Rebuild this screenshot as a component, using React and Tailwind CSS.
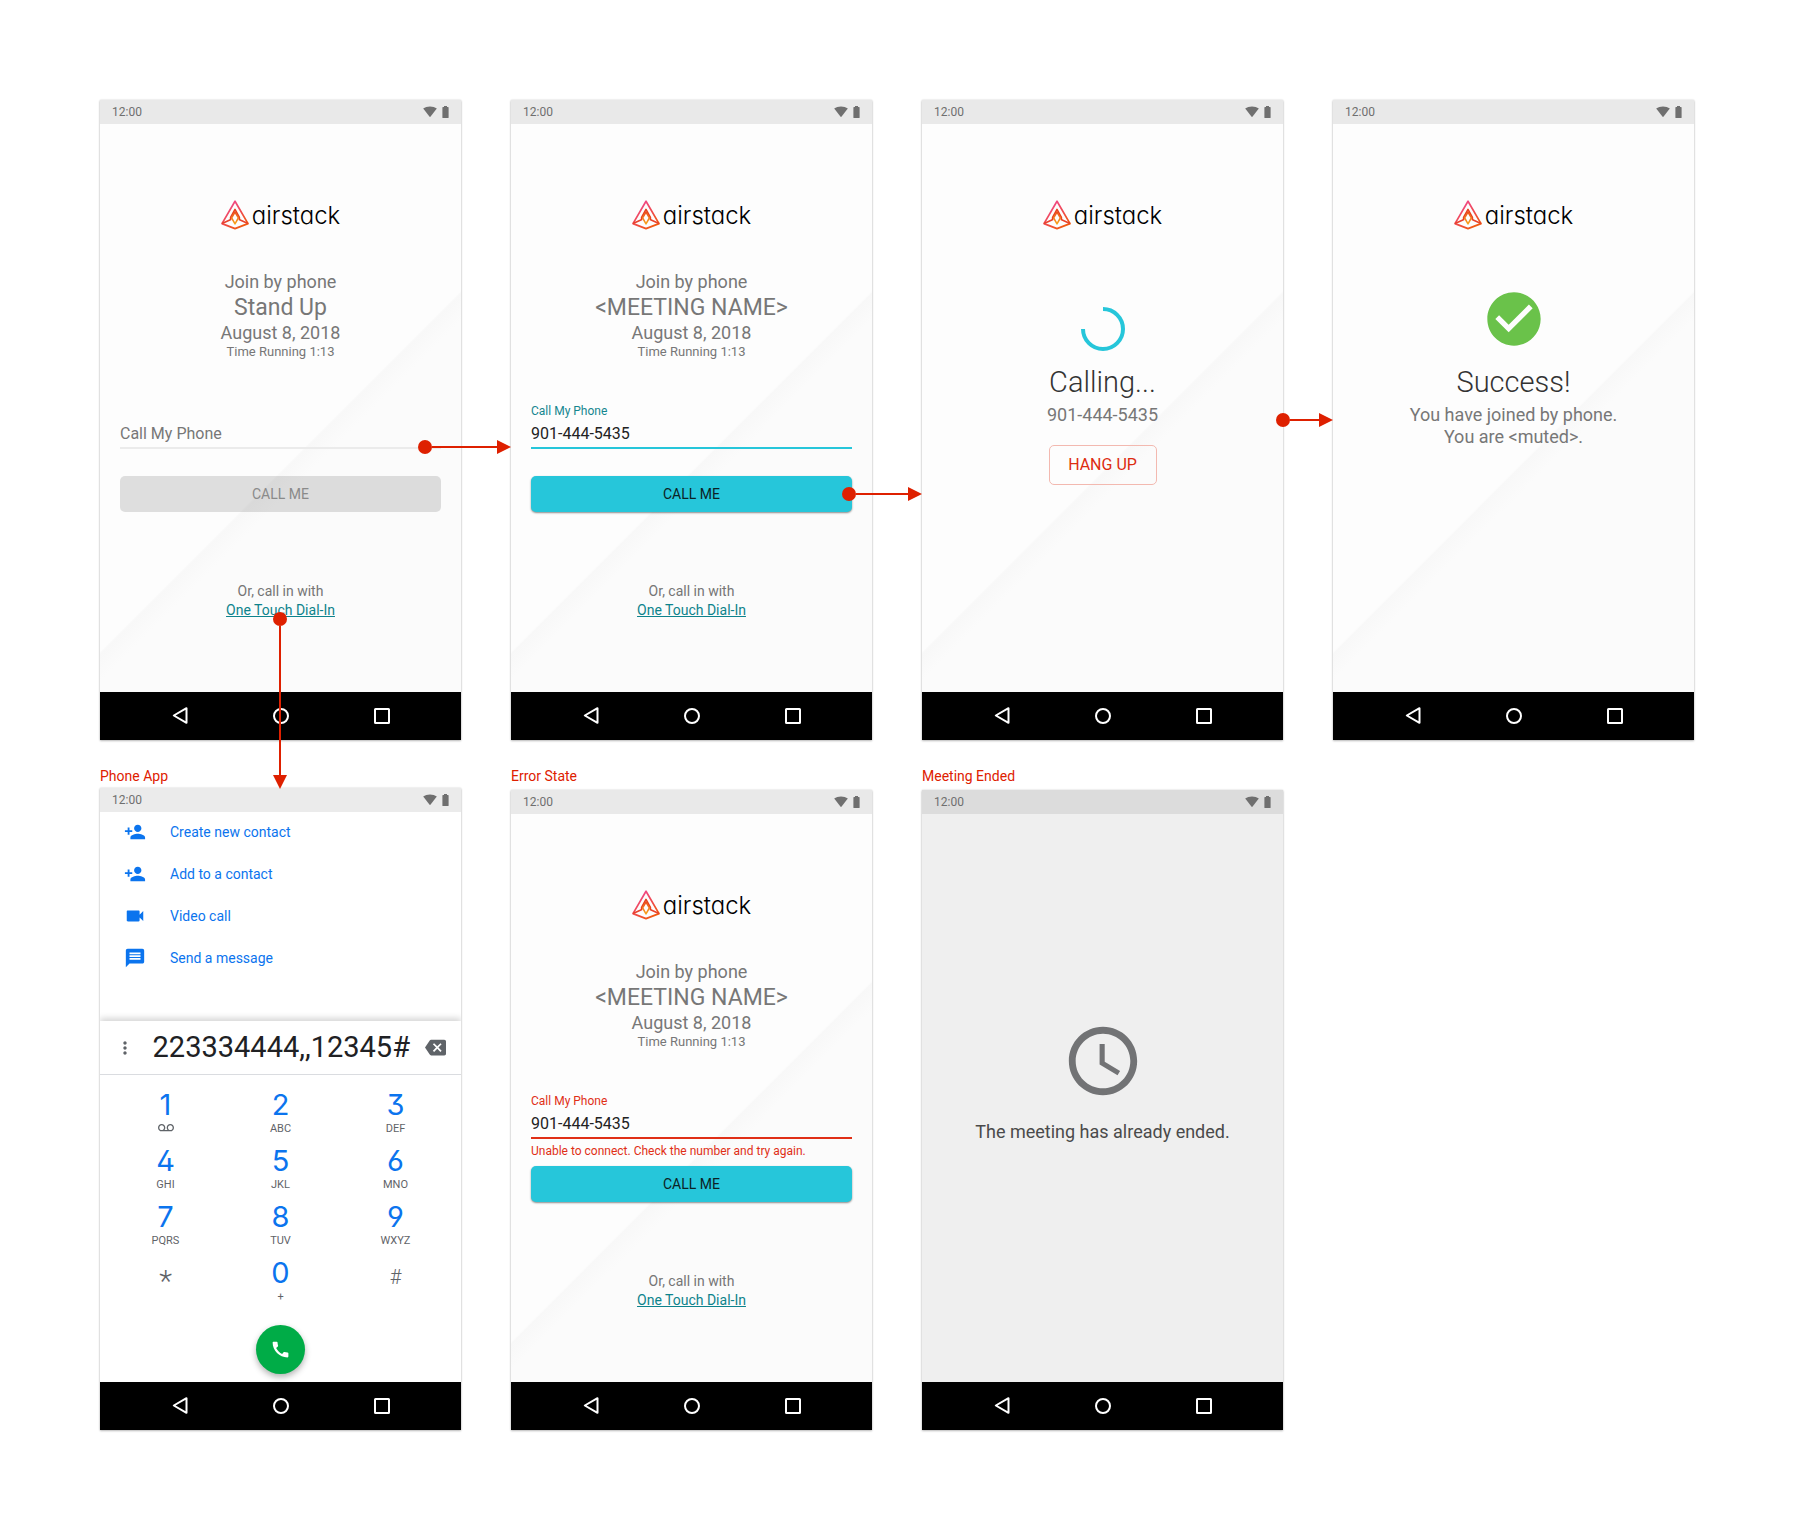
import React, { useId } from "react";
import {
  MdAccessTime,
  MdBackspace,
  MdCall,
  MdCheckCircle,
  MdMessage,
  MdMoreVert,
  MdPersonAdd,
  MdVideocam,
  MdVoicemail,
} from "react-icons/md";

function StatusBar({ className = "bg-[#e9e9e9]" }) {
  return (
    <div className={`flex h-6 items-center justify-between px-3 text-[#6f6f6f] ${className}`}>
      <span className="text-[12px]">12:00</span>
      <span className="flex items-center gap-[5px]">
        <svg width="14" height="12" viewBox="0 0 14 12" fill="currentColor" aria-hidden="true">
          <path d="M0.2 2.6C2 1.2 4.4 0.4 7 0.4s5 0.8 6.8 2.2L7.6 10.6a0.8 0.8 0 0 1-1.2 0z" />
        </svg>
        <svg width="7" height="12" viewBox="0 0 7 12" fill="currentColor" aria-hidden="true">
          <path d="M2 0h3v1h1q0.6 0 0.6 0.6v9.8q0 0.6-0.6 0.6H1q-0.6 0-0.6-0.6V1.6Q0.4 1 1 1h1z" />
        </svg>
      </span>
    </div>
  );
}

function NavBar() {
  const button = "flex size-6 items-center justify-center";
  return (
    <nav className="flex h-12 shrink-0 items-center justify-center gap-[77px] bg-black text-white">
      <button type="button" aria-label="Back" className={button}>
        <svg width="18" height="20" viewBox="0 0 18 20" fill="none" stroke="currentColor" strokeWidth="2" strokeLinejoin="round">
          <path d="M15.5 2.2v14.6L2.8 9.5z" />
        </svg>
      </button>
      <button type="button" aria-label="Home" className={button}>
        <svg width="18" height="18" viewBox="0 0 18 18" fill="none" stroke="currentColor" strokeWidth="2">
          <circle cx="9" cy="9" r="7" />
        </svg>
      </button>
      <button type="button" aria-label="Recent apps" className={button}>
        <svg width="18" height="18" viewBox="0 0 18 18" fill="none" stroke="currentColor" strokeWidth="2">
          <rect x="2" y="2" width="14" height="14" rx="0.5" />
        </svg>
      </button>
    </nav>
  );
}

const SHEEN =
  "bg-[linear-gradient(135deg,#fdfdfd_373px,#f8f8f8_375px,#fbfbfb_394px)]";

function Phone({ children, statusClass, bodyClass = SHEEN }) {
  return (
    <article className="flex min-h-[640px] flex-1 flex-col shadow-[0_0_2px_rgba(0,0,0,0.14),0_1px_2px_rgba(0,0,0,0.24)]">
      <StatusBar className={statusClass} />
      <div className={`flex flex-1 flex-col ${bodyClass}`}>{children}</div>
      <NavBar />
    </article>
  );
}

function Logo() {
  const id = useId();
  return (
    <div className="mt-[76px] flex h-[30px] items-center justify-center gap-[3px]">
      <svg width="28" height="30" viewBox="0 0 28 30" fill="none" strokeLinejoin="round" aria-hidden="true">
        <defs>
          <linearGradient id={`${id}a`} x1="6" y1="4" x2="22" y2="26" gradientUnits="userSpaceOnUse">
            <stop offset="0" stopColor="#f04a8c" />
            <stop offset="0.55" stopColor="#ef4a4a" />
            <stop offset="1" stopColor="#f05a10" />
          </linearGradient>
          <linearGradient id={`${id}b`} x1="14" y1="10" x2="14" y2="24" gradientUnits="userSpaceOnUse">
            <stop offset="0" stopColor="#e8401c" />
            <stop offset="1" stopColor="#f8a51b" />
          </linearGradient>
        </defs>
        <path d="M14 1.2 1 23.6 14 28.6 27 23.6z" stroke={`url(#${id}a)`} strokeWidth="1.7" />
        <path d="M1 23.6 9.4 19.8M27 23.6 18.6 19.8" stroke="#e8432c" strokeWidth="1.6" />
        <path d="M9.6 20.2V17.4L14 9.4 18.4 17.4v2.8" stroke="#e8401c" strokeWidth="1.6" />
        <path d="M14 12 10.6 17.8 14 23.8 17.4 17.8z" stroke={`url(#${id}b)`} strokeWidth="1.6" />
      </svg>
      <span className="font-['Inter',sans-serif] text-[24px] font-light leading-[31px] text-black [font-feature-settings:'cv11']">
        airstack
      </span>
    </div>
  );
}

function JoinScreen({ meeting, state }) {
  const id = useId();
  const idle = state === "idle";
  const error = state === "error";
  const line = idle ? "border-[#ebebeb]" : error ? "border-[#e02f16]" : "border-[#26c6da]";
  return (
    <Phone>
      <Logo />
      <header className="mt-10 text-center text-[#777]">
        <p className="text-[18px] leading-6">Join by phone</p>
        <h2 className="text-[23px] leading-7">{meeting}</h2>
        <p className="text-[18px] leading-[22px]">August 8, 2018</p>
        <p className="text-[13px] leading-4">Time Running 1:13</p>
      </header>
      <form className="mt-[43px] px-5" onSubmit={(e) => e.preventDefault()}>
        <label
          htmlFor={id}
          className={`block h-4 text-[12px] leading-4 ${error ? "text-[#e02f16]" : "text-[#15868f]"}`}
        >
          {!idle && "Call My Phone"}
        </label>
        <input
          id={id}
          type="tel"
          aria-label="Call My Phone"
          placeholder="Call My Phone"
          defaultValue={idle ? "" : "901-444-5435"}
          className={`block h-[30px] w-full border-b-2 bg-transparent p-0 text-[16px] text-[#222] outline-none placeholder:text-[#777] ${line}`}
        />
        <p className="h-[27px] text-[12px] leading-6 text-[#e02f16]">
          {error && "Unable to connect. Check the number and try again."}
        </p>
        <button
          type="submit"
          disabled={idle}
          className={`h-9 w-full rounded-[5px] text-[14px] ${
            idle
              ? "bg-black/12 text-[#8a8a8a]"
              : "bg-[#26c6da] text-[#0c2225] shadow-[0_1px_2px_rgba(0,0,0,0.45)]"
          }`}
        >
          CALL ME
        </button>
      </form>
      <p className="mt-[70px] pb-[72px] text-center text-[14px] leading-[19px] text-[#757575]">
        Or, call in with
        <br />
        <a href="#dial-in" className="text-[#0d838c] underline">
          One Touch Dial-In
        </a>
      </p>
    </Phone>
  );
}

function CallingScreen() {
  return (
    <Phone>
      <Logo />
      <div className="mt-[77px] flex flex-col items-center">
        <svg width="44" height="44" viewBox="0 0 44 44" fill="none" role="img" aria-label="Calling">
          <path d="M22 2a20 20 0 1 1-20 20" stroke="#26c6da" strokeWidth="4" />
        </svg>
        <h2 className="mt-[13px] text-[29px] font-light leading-9 text-[#333]">Calling...</h2>
        <p className="mt-1 text-[18px] leading-[22px] text-[#777]">901-444-5435</p>
        <button
          type="button"
          className="mt-[19px] h-10 w-[108px] rounded-[5px] border border-[#f3b9b0] text-[16px] text-[#dd2c10]"
        >
          HANG UP
        </button>
      </div>
    </Phone>
  );
}

function SuccessScreen() {
  return (
    <Phone>
      <Logo />
      <div className="mt-[57px] flex flex-col items-center">
        <MdCheckCircle size={64} color="#6ac24a" aria-hidden="true" />
        <h2 className="mt-[13px] text-[29px] font-light leading-9 text-[#333]">Success!</h2>
        <p className="mt-1 text-center text-[18px] leading-[22px] text-[#777]">
          You have joined by phone.
          <br />
          You are &lt;muted&gt;.
        </p>
      </div>
    </Phone>
  );
}

function EndedScreen() {
  return (
    <Phone statusClass="bg-[#dcdcdc]" bodyClass="bg-[#efefef]">
      <div className="mt-[206px] flex flex-col items-center">
        <MdAccessTime size={82} color="#727375" aria-hidden="true" />
        <p className="mt-[18px] text-[18px] leading-6 text-[#4a4a4a]">
          The meeting has already ended.
        </p>
      </div>
    </Phone>
  );
}

const ACTIONS = [
  [MdPersonAdd, "Create new contact"],
  [MdPersonAdd, "Add to a contact"],
  [MdVideocam, "Video call"],
  [MdMessage, "Send a message"],
];

const KEYS = [
  ["1", <MdVoicemail key="vm" size={16} aria-label="Voicemail" />],
  ["2", "ABC"],
  ["3", "DEF"],
  ["4", "GHI"],
  ["5", "JKL"],
  ["6", "MNO"],
  ["7", "PQRS"],
  ["8", "TUV"],
  ["9", "WXYZ"],
  ["*"],
  ["0", "+"],
  ["#"],
];

function DialerScreen() {
  return (
    <Phone statusClass="bg-[#ebebeb]" bodyClass="bg-white">
      <ul className="pb-[41px]">
        {ACTIONS.map(([Icon, text]) => (
          <li key={text}>
            <button
              type="button"
              className="flex h-[42px] w-full items-center gap-6 pb-[2px] pl-6 text-[14px] text-[#0b74ee]"
            >
              <Icon size={22} />
              {text}
            </button>
          </li>
        ))}
      </ul>
      <div className="flex h-[54px] items-center border-b border-[#dadce0] px-[15px] text-[#5f6368] shadow-[0_-3px_6px_rgba(0,0,0,0.16)] [clip-path:inset(-12px_0_0_0)]">
        <button type="button" aria-label="More options">
          <MdMoreVert size={20} />
        </button>
        <output className="flex-1 pr-[15px] text-right text-[29px] leading-none text-[#202124]">
          223334444,,12345#
        </output>
        <button type="button" aria-label="Delete">
          <MdBackspace size={21} />
        </button>
      </div>
      <div className="grid grid-cols-3 px-2 pt-3">
        {KEYS.map(([digit, sub]) => (
          <button
            key={digit}
            type="button"
            className="flex h-14 flex-col items-center pt-1 text-[#5f6368]"
          >
            {sub ? (
              <>
                <span className="font-['Inter',sans-serif] text-[29px] leading-7 text-[#0b74ee] [font-feature-settings:'ss01']">
                  {digit}
                </span>
                <span className="mt-[2px] flex h-[14px] items-center text-[11px] leading-none">{sub}</span>
              </>
            ) : (
              <span
                className={
                  digit === "*"
                    ? "text-[30px] font-light leading-[44px]"
                    : "text-[20px] font-light leading-9"
                }
              >
                {digit}
              </span>
            )}
          </button>
        ))}
      </div>
      <button
        type="button"
        aria-label="Call"
        className="mb-2 mt-[14px] flex size-[49px] items-center justify-center self-center rounded-full bg-[#00ac47] text-white shadow-[0_3px_6px_rgba(0,0,0,0.3)]"
      >
        <MdCall size={21} />
      </button>
    </Phone>
  );
}

/* Connector drawn over the gap between two screens. */
function ArrowRight({ className }) {
  return (
    <span aria-hidden="true" className={`absolute -right-[50px] z-10 flex h-[14px] items-center ${className}`}>
      <span className="size-[14px] rounded-full bg-[#de2000]" />
      <span className="h-[2px] flex-1 bg-[#de2000]" />
      <svg width="14" height="14" viewBox="0 0 14 14" fill="#de2000">
        <path d="M0 0 14 7 0 14z" />
      </svg>
    </span>
  );
}

function ArrowDown({ className }) {
  return (
    <span aria-hidden="true" className={`absolute z-10 flex w-[14px] flex-col items-center ${className}`}>
      <span className="size-[14px] rounded-full bg-[#de2000]" />
      <span className="w-[2px] flex-1 bg-[#de2000]" />
      <svg width="14" height="14" viewBox="0 0 14 14" fill="#de2000">
        <path d="M0 0 7 14 14 0z" />
      </svg>
    </span>
  );
}

function Cell({ title, tight, children }) {
  return (
    <section className="relative flex flex-col">
      {title && (
        <h3
          className={`pt-6 text-[14px] leading-6 text-[#de2000] ${tight ? "" : "pb-[2px]"}`}
        >
          {title}
        </h3>
      )}
      {children}
    </section>
  );
}

export default function App() {
  return (
    <main className="grid min-h-screen grid-cols-4 content-start gap-x-[50px] bg-white p-[100px] font-['Roboto',sans-serif]">
      <Cell>
        <JoinScreen meeting="Stand Up" state="idle" />
        <ArrowRight className="top-[340px] w-[93px]" />
        <ArrowDown className="left-[173px] top-[512px] h-[177px]" />
      </Cell>
      <Cell>
        <JoinScreen meeting="<MEETING NAME>" state="focused" />
        <ArrowRight className="top-[387px] w-[80px]" />
      </Cell>
      <Cell>
        <CallingScreen />
        <ArrowRight className="top-[313px] w-[57px]" />
      </Cell>
      <Cell>
        <SuccessScreen />
      </Cell>
      <Cell title="Phone App" tight>
        <DialerScreen />
      </Cell>
      <Cell title="Error State">
        <JoinScreen meeting="<MEETING NAME>" state="error" />
      </Cell>
      <Cell title="Meeting Ended">
        <EndedScreen />
      </Cell>
    </main>
  );
}
